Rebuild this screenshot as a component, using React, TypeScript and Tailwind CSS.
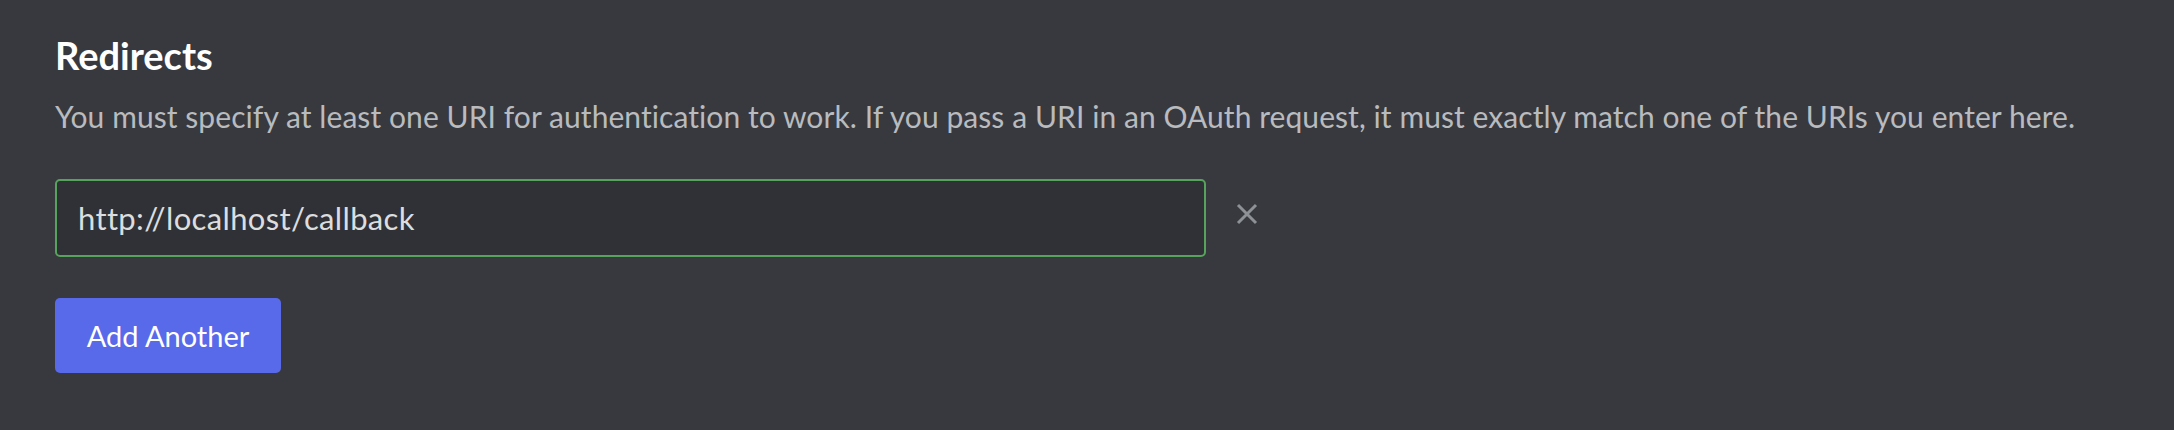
import React from "react";

export default function App() {
  return (
    <div
      className="w-full h-[430px] bg-[#37393f] pl-[55px] pt-[31px]"
      style={{ fontFamily: "Lato, 'Open Sans', sans-serif" }}
    >
      <h2 className="text-[38px] leading-[48px] font-bold text-white">Redirects</h2>
      <p className="mt-[17px] text-[30px] leading-[40px] tracking-[0.07px] text-[#b9bbbe]">
        You must specify at least one URI for authentication to work. If you pass a URI in an OAuth request, it must exactly match one of the URIs you enter here.
      </p>
      <div className="mt-[43px] flex items-start">
        <div className="w-[1151px] h-[78px] rounded-[5px] border-2 border-[#57a35c] bg-[#2f3136] flex items-center pl-[21px]">
          <span className="text-[31px] tracking-[0.35px] text-[#dcddde]">http://localhost/callback</span>
        </div>
        <button className="ml-[30px] mt-[24px] w-[22px] h-[22px] flex items-center justify-center">
          <svg width="22" height="22" viewBox="0 0 22 22">
            <path d="M2 2 L20 20 M20 2 L2 20" stroke="#8e9297" strokeWidth="3" />
          </svg>
        </button>
      </div>
      <button className="mt-[41px] w-[226px] h-[75px] rounded-[5px] bg-[#5869ea] text-white text-[29px] flex items-center justify-center">
        Add Another
      </button>
    </div>
  );
}
